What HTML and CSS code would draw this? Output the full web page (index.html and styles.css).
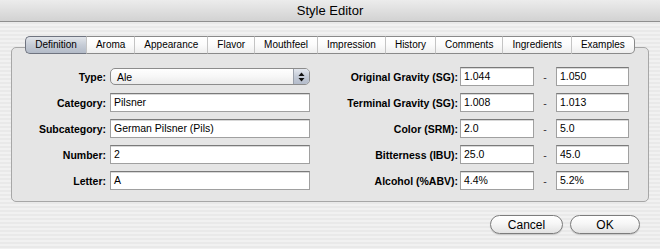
FILE: index.html
```html
<!DOCTYPE html>
<html>
<head>
    <title>Style Editor</title>
    <link rel="stylesheet" href="styles.css">
</head>
<body>
    <div class="window">
        <div class="titlebar">Style Editor</div>

        <div class="tabview">
            <div class="tabs">
                <div class="tab selected">Definition</div>
                <div class="tab">Aroma</div>
                <div class="tab">Appearance</div>
                <div class="tab">Flavor</div>
                <div class="tab">Mouthfeel</div>
                <div class="tab">Impression</div>
                <div class="tab">History</div>
                <div class="tab">Comments</div>
                <div class="tab">Ingredients</div>
                <div class="tab">Examples</div>
            </div>

            <div class="panel">
                <div class="form">
                    <!-- row 1 -->
                    <label class="label-left">Type:</label>
                    <div class="popup">
                        <span>Ale</span>
                        <span class="stepper">
                            <svg width="7" height="10" viewBox="0 0 7 10">
                                <path d="M3.5 0.5 L6.5 4 L0.5 4 Z" fill="#111"/>
                                <path d="M3.5 9.5 L6.5 6 L0.5 6 Z" fill="#111"/>
                            </svg>
                        </span>
                    </div>
                    <label class="label-right">Original Gravity (SG):</label>
                    <div class="field">1.044</div>
                    <div class="dash">-</div>
                    <div class="field">1.050</div>

                    <!-- row 2 -->
                    <label class="label-left">Category:</label>
                    <div class="field">Pilsner</div>
                    <label class="label-right">Terminal Gravity (SG):</label>
                    <div class="field">1.008</div>
                    <div class="dash">-</div>
                    <div class="field">1.013</div>

                    <!-- row 3 -->
                    <label class="label-left">Subcategory:</label>
                    <div class="field">German Pilsner (Pils)</div>
                    <label class="label-right">Color (SRM):</label>
                    <div class="field">2.0</div>
                    <div class="dash">-</div>
                    <div class="field">5.0</div>

                    <!-- row 4 -->
                    <label class="label-left">Number:</label>
                    <div class="field">2</div>
                    <label class="label-right">Bitterness (IBU):</label>
                    <div class="field">25.0</div>
                    <div class="dash">-</div>
                    <div class="field">45.0</div>

                    <!-- row 5 -->
                    <label class="label-left">Letter:</label>
                    <div class="field">A</div>
                    <label class="label-right">Alcohol (%ABV):</label>
                    <div class="field">4.4%</div>
                    <div class="dash">-</div>
                    <div class="field">5.2%</div>
                </div>
            </div>
        </div>

        <div class="buttons">
            <button class="btn cancel">Cancel</button>
            <button class="btn ok">OK</button>
        </div>
    </div>
</body>
</html>
```

FILE: styles.css
```css
body {
    margin: 0;
    font-family: "Liberation Sans", Arial, sans-serif;
    color: #000;
}
.window {
    width: 660px;
    height: 249px;
    background: repeating-linear-gradient(180deg, #f1f1f1 0, #f1f1f1 2px, #e9e9e9 2px, #e9e9e9 4px);
    overflow: hidden;
}
.titlebar {
    height: 21px;
    line-height: 22px;
    text-align: center;
    font-size: 13px;
    background: linear-gradient(#ececec, #d2d2d2);
    border-bottom: 1px solid #8e8e8e;
}
.tabview {
    margin-top: 14px;
    padding: 0 11px;
}
.tabs {
    display: flex;
    justify-content: center;
    position: relative;
    z-index: 1;
    height: 18px;
}
.tab {
    padding: 0 9px;
    font-size: 10px;
    line-height: 16px;
    border-top: 1px solid #8a8a8a;
    border-bottom: 1px solid #8a8a8a;
    border-left: 1px solid #c4c4c4;
    background: linear-gradient(#ffffff, #fbfbfb 50%, #eeeeee);
}
.tab:first-child {
    border-left: 1px solid #8a8a8a;
    border-radius: 5px 0 0 5px;
}
.tab:last-child {
    border-right: 1px solid #8a8a8a;
    border-radius: 0 5px 5px 0;
}
.tab.selected {
    background: linear-gradient(#e2e5ea, #c6ccd6 50%, #b3bbc8);
    border-color: #6f7480;
}
.panel {
    margin-top: -7px;
    height: 134px;
    padding: 19px 0 0;
    border: 1px solid #a7a7a7;
    border-radius: 5px;
    background: #e5e5e5;
}
.form {
    display: grid;
    grid-template-columns: 98px 200px 150px 74px 22px 73px;
    grid-auto-rows: 19px;
    row-gap: 7px;
    align-items: center;
}
.label-left,
.label-right {
    font-size: 10.5px;
    font-weight: bold;
    text-align: right;
    white-space: nowrap;
}
.label-left {
    padding-right: 4px;
}
.label-right {
    padding-right: 2px;
}
.field {
    height: 17px;
    line-height: 16px;
    padding-left: 3px;
    font-size: 10.5px;
    background: #fff;
    border: 1px solid #a0a0a0;
    border-top-color: #7a7a7a;
    box-shadow: inset 0 1px 0 #d8d8d8;
}
.dash {
    text-align: center;
    font-size: 10.5px;
    color: #333;
}
.popup {
    height: 15px;
    display: flex;
    align-items: center;
    justify-content: space-between;
    padding-left: 6px;
    font-size: 10.5px;
    border: 1px solid #8c8c8c;
    border-radius: 5px;
    background: linear-gradient(#ffffff, #f7f7f7 50%, #ebebeb);
}
.stepper {
    width: 15px;
    height: 15px;
    display: flex;
    align-items: center;
    justify-content: center;
    border-left: 1px solid #9aa0ab;
    border-radius: 0 4px 4px 0;
    background: linear-gradient(#e3e7ee, #c4cbd7 50%, #b4bccb);
}
.buttons {
    display: flex;
    justify-content: flex-end;
    gap: 7px;
    margin-top: 13px;
    padding-right: 20px;
}
.btn {
    height: 19px;
    padding: 0;
    font-family: "Liberation Sans", Arial, sans-serif;
    font-size: 12px;
    color: #000;
    border: 1px solid #7c7c7c;
    border-radius: 10px;
    background: linear-gradient(#ffffff, #f6f6f6 45%, #e2e2e2);
    box-shadow: 0 1px 1px rgba(0, 0, 0, 0.15);
}
.cancel {
    width: 73px;
}
.ok {
    width: 70px;
}
```
